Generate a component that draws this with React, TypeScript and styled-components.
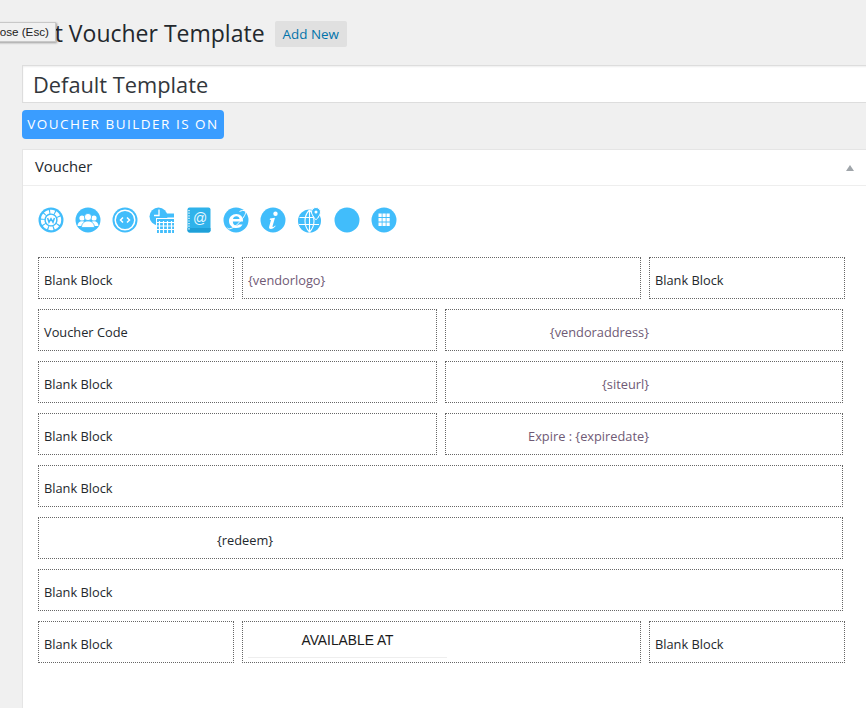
import React from "react";
import styled, { createGlobalStyle } from "styled-components";

const GlobalStyle = createGlobalStyle`
  html, body {
    margin: 0;
    padding: 0;
    background: #f0f0f0;
    overflow: hidden;
  }
  body {
    font-family: "Open Sans", sans-serif;
    color: #23282d;
  }
`;

type Cell = { text: string; tag?: boolean; right?: boolean; indent?: number };

const rows: { layout: "three" | "two" | "one"; cells: Cell[] }[] = [
  {
    layout: "three",
    cells: [{ text: "Blank Block" }, { text: "{vendorlogo}", tag: true }, { text: "Blank Block" }],
  },
  {
    layout: "two",
    cells: [{ text: "Voucher Code" }, { text: "{vendoraddress}", tag: true, right: true }],
  },
  {
    layout: "two",
    cells: [{ text: "Blank Block" }, { text: "{siteurl}", tag: true, right: true }],
  },
  {
    layout: "two",
    cells: [{ text: "Blank Block" }, { text: "Expire : {expiredate}", tag: true, right: true }],
  },
  { layout: "one", cells: [{ text: "Blank Block" }] },
  { layout: "one", cells: [{ text: "{redeem}", indent: 178 }] },
  { layout: "one", cells: [{ text: "Blank Block" }] },
];

const BLUE = "#41bdfb";

const Circle = ({ children }: { children?: React.ReactNode }) => (
  <IconSvg viewBox="0 0 26 26">
    <circle cx="13" cy="13" r="12.5" fill={BLUE} />
    {children}
  </IconSvg>
);

const Icons = () => (
  <IconRow>
    <Circle>
      <circle cx="13" cy="13" r="8.4" fill="none" stroke="#fff" strokeWidth="3.6" strokeDasharray="4.4 1.1" />
      <circle cx="13" cy="13" r="5.2" fill="#fff" />
      <path d="M9.6 11l1.4 4.200 2-3.400 2 3.400 1.400-4.200" fill="none" stroke={BLUE} strokeWidth="1.500" />
    </Circle>
    <Circle>
      <circle cx="7" cy="11" r="2.600" fill="#fff" />
      <circle cx="19" cy="11" r="2.600" fill="#fff" />
      <path d="M2.500 19c0-3 2-4.800 4.500-4.800s4.500 1.800 4.500 4.800zM14.500 19c0-3 2-4.800 4.500-4.800s4.500 1.800 4.500 4.800z" fill="#fff" />
      <circle cx="13" cy="10" r="3.600" fill="#fff" stroke={BLUE} strokeWidth="0.800" />
      <path d="M6.500 20.500c0-4 2.800-6.500 6.500-6.500s6.500 2.500 6.500 6.500z" fill="#fff" stroke={BLUE} strokeWidth="0.800" />
    </Circle>
    <Circle>
      <circle cx="13" cy="13" r="9.800" fill="none" stroke="#fff" strokeWidth="1.500" />
      <path d="M11 10.500L8.500 13l2.500 2.500M15 10.500l2.500 2.500-2.500 2.500" fill="none" stroke="#fff" strokeWidth="1.500" />
    </Circle>
    <IconSvg viewBox="0 0 26 26">
      <circle cx="9.500" cy="9.500" r="9" fill={BLUE} />
      <path d="M5 8.500h5V2.500" fill="none" stroke="#fff" strokeWidth="1.300" />
      <path d="M15.500 6.500h9.500v4h-9.500z" fill={BLUE} />
      <path d="M7 11h19v15H7z" fill="#fff" />
      <path d="M8 12h17v14H8z" fill={BLUE} />
      <path
        d="M10.500 14v12M14.500 14v12M18.500 14v12M22.500 14v12M8 15.500h17M8 19h17M8 22.500h17"
        stroke="#fff"
        strokeWidth="1.200"
      />
    </IconSvg>
    <IconSvg viewBox="0 0 26 26">
      <rect x="1.500" y="0.500" width="23" height="25" rx="2" fill="#2fb2ea" />
      <path d="M1.500 21h23v2.500a2 2 0 0 1-2 2h-19a2 2 0 0 1-2-2z" fill="#1fa0d8" />
      <path d="M3 3v20" stroke="#d8f1fb" strokeWidth="1.600" strokeDasharray="1.200 1.400" />
      <text x="14" y="16" fontSize="14" fontFamily="Liberation Sans, sans-serif" fill="#e8f8ff" textAnchor="middle">
        @
      </text>
    </IconSvg>
    <Circle>
      <path
        d="M5.500 14.500h14.500c.3-4.500-2.500-7.500-6.600-7.500-4.300 0-7.400 3.200-7.400 7 0 4.300 3.200 7 7.200 7 3 0 5.200-1.300 6.300-3.600h-3.700c-.6.800-1.400 1.100-2.500 1.100-2 0-3.400-1.500-3.500-4M10 12c.2-1.700 1.500-2.800 3.400-2.800 1.800 0 3 1.100 3.200 2.800z"
        fill="#fff"
        fillRule="evenodd"
      />
      <path d="M4.500 21c2 2.500 8-1 13.500-7.500s5.500-9.500 3-10c-2-.3-4.500 1-4.500 1" fill="none" stroke="#fff" strokeWidth="1" />
    </Circle>
    <Circle>
      <circle cx="15.500" cy="6.800" r="2.200" fill="#fff" />
      <path
        d="M10 11.500l5-.8-2.500 8.500c-.2.900.5 1 1.200.5l1.500-1.200.4.500c-1.500 1.800-3 3-4.800 3-1.600 0-2-1-1.600-2.500l1.800-6.500-1.300-.3z"
        fill="#fff"
      />
    </Circle>
    <IconSvg viewBox="0 0 26 26">
      <circle cx="12.500" cy="14" r="11.500" fill={BLUE} />
      <path
        d="M2.500 10.500h19M2 17.500h20M12.500 3c-6 6-6 16 0 22M12.500 3c6 6 6 16 0 22M12.500 3v22"
        fill="none"
        stroke="#fff"
        strokeWidth="1.100"
      />
      <path
        d="M19 .5a4.500 4.500 0 0 1 4.500 4.500c0 3-4.500 8-4.500 8s-4.500-5-4.500-8A4.500 4.500 0 0 1 19 .5z"
        fill={BLUE}
        stroke="#fff"
      />
      <circle cx="19" cy="5" r="1.500" fill="#fff" />
    </IconSvg>
    <Circle />
    <Circle>
      <path
        d="M7.500 6.500h3.200v3.500H7.500zM11.500 6.500h3.200v3.500h-3.200zM15.500 6.500h3.200v3.500h-3.200zM7.500 11h3.200v3.500H7.500zM11.500 11h3.200v3.500h-3.200zM15.500 11h3.200v3.500h-3.200zM7.500 15.500h3.200V19H7.500zM11.500 15.500h3.200V19h-3.200zM15.500 15.500h3.200V19h-3.200z"
        fill="#fff"
      />
    </Circle>
  </IconRow>
);

const App = () => (
  <Page>
    <GlobalStyle />
    <TitleRow>
      <Title>Edit Voucher Template</Title>
      <AddNew>Add New</AddNew>
    </TitleRow>
    <Tooltip>Close (Esc)</Tooltip>
    <NameInput>Default Template</NameInput>
    <BuilderButton>VOUCHER BUILDER IS ON</BuilderButton>
    <Panel>
      <PanelHead>
        <span>Voucher</span>
        <Arrow />
      </PanelHead>
      <PanelBody>
        <Icons />
        <Rows>
          {rows.map((row, i) => (
            <Row key={i} $layout={row.layout}>
              {row.cells.map((cell, j) => (
                <Block key={j} $tag={cell.tag} $right={cell.right} $indent={cell.indent}>
                  {cell.text}
                </Block>
              ))}
            </Row>
          ))}
          <Row $layout="three">
            <Block>Blank Block</Block>
            <AvailableBlock>
              <AvailableText>AVAILABLE AT</AvailableText>
            </AvailableBlock>
            <Block>Blank Block</Block>
          </Row>
        </Rows>
      </PanelBody>
    </Panel>
  </Page>
);

export default App;

const Page = styled.div`
  position: relative;
  width: 866px;
  height: 708px;
  overflow: hidden;
  padding-left: 22px;
  box-sizing: border-box;
`;

const TitleRow = styled.div`
  display: flex;
  align-items: center;
  height: 65px;
`;

const Title = styled.h1`
  margin: 1px 0 0;
  font-size: 23px;
  font-weight: 400;
  line-height: 29px;
  color: #23282d;
  white-space: nowrap;
`;

const AddNew = styled.a`
  margin: 3px 0 0 10px;
  padding: 0 8px;
  height: 26px;
  line-height: 26px;
  border-radius: 2px;
  background: #e0e0e0;
  color: #0073aa;
  font-size: 13.4px;
  white-space: nowrap;
`;

const Tooltip = styled.div`
  position: absolute;
  right: 810px;
  top: 22px;
  height: 20px;
  box-sizing: border-box;
  padding: 0 6px;
  border: 1px solid #c8c8c8;
  background: #f1f1f1;
  box-shadow: 1px 1px 2px rgba(0, 0, 0, 0.35);
  font-family: "Liberation Sans", sans-serif;
  font-size: 11.7px;
  line-height: 18px;
  color: #222;
  white-space: nowrap;
`;

const NameInput = styled.div`
  width: 870px;
  height: 38px;
  box-sizing: border-box;
  border: 1px solid #ddd;
  background: #fff;
  padding-left: 10px;
  font-size: 21.8px;
  line-height: 37px;
  color: #32373c;
  box-shadow: inset 0 1px 2px rgba(0, 0, 0, 0.07);
`;

const BuilderButton = styled.div`
  width: 202px;
  height: 29px;
  margin-top: 7px;
  border-radius: 4px;
  background: #3a9dff;
  color: #fff;
  font-size: 13.5px;
  line-height: 29px;
  letter-spacing: 1.5px;
  text-align: center;
  white-space: nowrap;
`;

const Panel = styled.section`
  width: 870px;
  height: 600px;
  margin-top: 10px;
  box-sizing: border-box;
  border: 1px solid #e5e5e5;
  background: #fff;
`;

const PanelHead = styled.div`
  display: flex;
  align-items: center;
  justify-content: space-between;
  box-sizing: border-box;
  height: 36px;
  padding: 0 37px 4px 12px;
  border-bottom: 1px solid #eee;
  font-size: 14.8px;
  color: #23282d;
`;

const Arrow = styled.i`
  width: 0;
  height: 0;
  margin-top: 4px;
  border-left: 4px solid transparent;
  border-right: 4px solid transparent;
  border-bottom: 6px solid #a0a5aa;
`;

const PanelBody = styled.div`
  padding: 21px 0 0 15px;
`;

const IconRow = styled.div`
  display: flex;
  gap: 11px;
  height: 26px;
`;

const IconSvg = styled.svg`
  width: 26px;
  height: 26px;
  flex: none;
`;

const Rows = styled.div`
  display: flex;
  flex-direction: column;
  gap: 10px;
  margin-top: 24px;
  width: 807px;
`;

const Row = styled.div<{ $layout: "three" | "two" | "one" }>`
  display: grid;
  gap: 8px;
  height: 42px;
  grid-template-columns: ${(p) =>
    p.$layout === "three" ? "196px 399px 196px" : p.$layout === "two" ? "399px 398px" : "805px"};
`;

const Block = styled.div<{ $tag?: boolean; $right?: boolean; $indent?: number }>`
  box-sizing: border-box;
  border: 1px dotted #666;
  padding: 13px 5px 0;
  font-size: 12.8px;
  line-height: 18px;
  white-space: nowrap;
  color: ${(p) => (p.$tag ? "#6f5a75" : "#23282d")};
  ${(p) => (p.$right ? "text-align: right; padding-right: 193px;" : "")}
  ${(p) => (p.$indent ? `padding-left: ${p.$indent}px;` : "")}
`;

const AvailableBlock = styled.div`
  box-sizing: border-box;
  border: 1px dotted #666;
  padding: 0 5px;
`;

const AvailableText = styled.div`
  width: 199px;
  height: 36px;
  border-bottom: 1px solid #eee;
  box-sizing: border-box;
  padding-top: 10px;
  font-family: "Liberation Sans", sans-serif;
  font-size: 13.8px;
  line-height: 17px;
  text-align: center;
  color: #1a1a1a;
`;
